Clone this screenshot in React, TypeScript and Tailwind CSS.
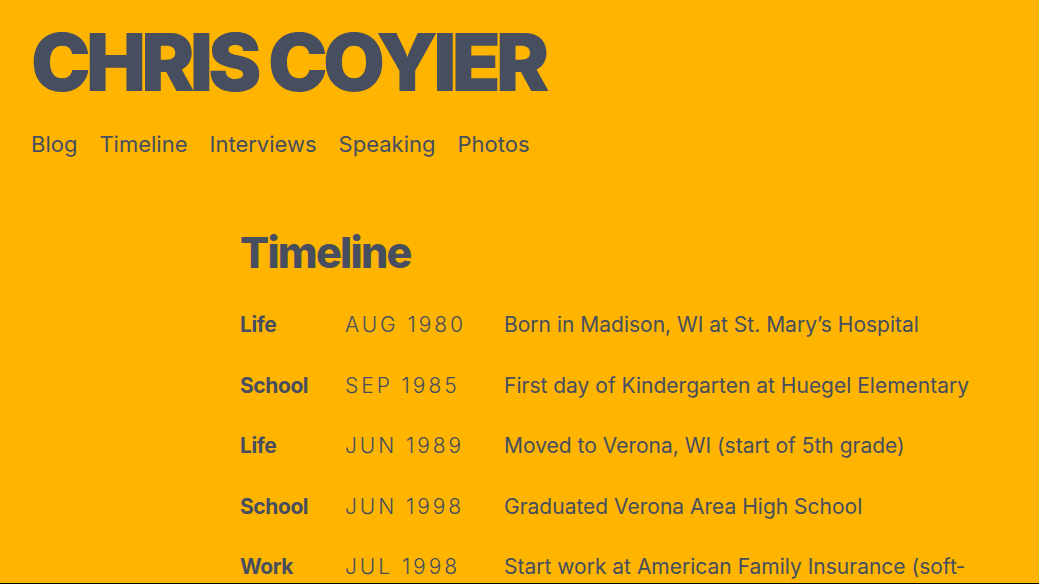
import React from "react";

const rows = [
  { kind: "Life", date: "AUG 1980", text: "Born in Madison, WI at St. Mary’s Hospital" },
  { kind: "School", date: "SEP 1985", text: "First day of Kindergarten at Huegel Elementary" },
  { kind: "Life", date: "JUN 1989", text: "Moved to Verona, WI (start of 5th grade)" },
  { kind: "School", date: "JUN 1998", text: "Graduated Verona Area High School" },
  { kind: "Work", date: "JUL 1998", text: "Start work at American Family Insurance (soft\u00adware developer intern)" },
  { kind: "School", date: "SEP 1998", text: "Started at University of Wisconsin" },
];

export default function App() {
  return (
    <div className="h-[584px] overflow-hidden border-b border-black bg-[#ffb500] text-[#464e5f] font-['Inter',sans-serif]">
      <header className="px-[31px] pt-[22px]">
        <h1 className="text-[80px] font-black leading-none tracking-[-0.06em]">CHRIS COYIER</h1>
        <nav className="mt-[26px] flex gap-[22px] text-[22px]">
          <a>Blog</a>
          <a>Timeline</a>
          <a>Interviews</a>
          <a>Speaking</a>
          <a>Photos</a>
        </nav>
      </header>
      <main className="pl-[240px] pt-[70px]">
        <h2 className="text-[43px] font-extrabold leading-none tracking-[-0.04em]">Timeline</h2>
        <div className="mt-[37px] flex flex-col gap-[32px]">
          {rows.map((r, i) => (
            <div key={i} className="flex items-baseline text-[21px] leading-[28.5px]">
              <div className="w-[105px] shrink-0 font-bold tracking-[-0.02em]">{r.kind}</div>
              <div className="w-[159px] shrink-0 tracking-[0.14em] font-light">{r.date}</div>
              <div className="w-[480px] hyphens-manual">{r.text}</div>
            </div>
          ))}
        </div>
      </main>
    </div>
  );
}
